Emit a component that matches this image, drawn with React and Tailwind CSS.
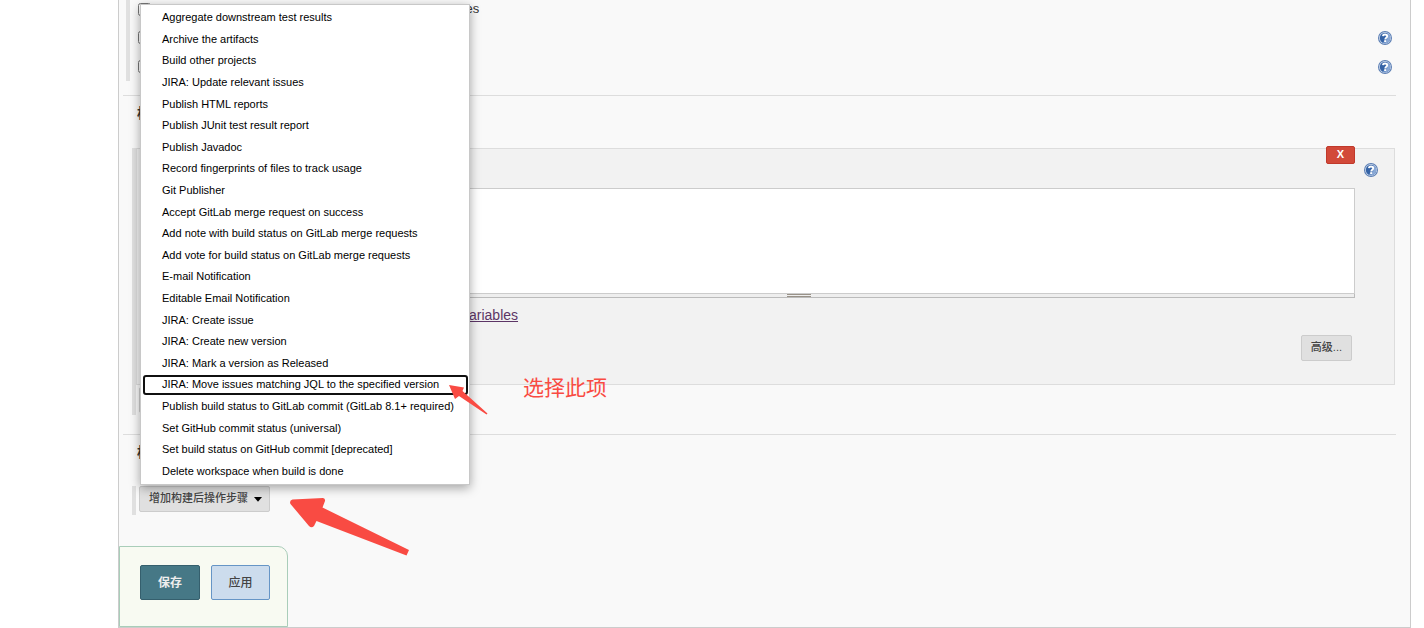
import React from "react";

const postBuildActions = [
  "Aggregate downstream test results",
  "Archive the artifacts",
  "Build other projects",
  "JIRA: Update relevant issues",
  "Publish HTML reports",
  "Publish JUnit test result report",
  "Publish Javadoc",
  "Record fingerprints of files to track usage",
  "Git Publisher",
  "Accept GitLab merge request on success",
  "Add note with build status on GitLab merge requests",
  "Add vote for build status on GitLab merge requests",
  "E-mail Notification",
  "Editable Email Notification",
  "JIRA: Create issue",
  "JIRA: Create new version",
  "JIRA: Mark a version as Released",
  "JIRA: Move issues matching JQL to the specified version",
  "Publish build status to GitLab commit (GitLab 8.1+ required)",
  "Set GitHub commit status (universal)",
  "Set build status on GitHub commit [deprecated]",
  "Delete workspace when build is done",
];

const selectedAction = "JIRA: Move issues matching JQL to the specified version";

function HelpButton() {
  return (
    <button type="button" aria-label="Help" className="block size-4 shrink-0">
      <svg viewBox="0 0 16 16" className="size-4">
        <circle cx="8" cy="8" r="7" fill="#5a7db3" />
        <circle cx="8" cy="8" r="6" fill="#c9d7ea" />
        <circle cx="8" cy="8" r="5.2" fill="#3563a6" />
        <path d="M10 3.200A5.200 5.200 0 0 1 8 13.200C7 13.200 6 12.800 5.200 12.200C9 11 10.500 8 10 3.200z" fill="#6f94c9" />
        <path d="M10 3.200A5.200 5.200 0 0 1 8 13.200C10.500 11 11.500 7 10 3.200z" fill="#89a8d5" />
        <path d="M5.800 6.200C6 4.900 6.900 4.500 8 4.500c1.400 0 2.200.700 2.200 1.700 0 1.500-2 1.600-2 3.200" fill="none" stroke="#fff" strokeWidth="1.800" />
        <rect x="7.200" y="10.200" width="2" height="1.800" fill="#fff" />
      </svg>
    </button>
  );
}

function GreyButton({ children, className = "px-[9px]" }) {
  return (
    <button
      type="button"
      className={
        "flex h-[26px] items-center rounded-[2px] border border-[#ccc] bg-[#e0e0e0] text-[11px] font-medium text-[#444] " +
        className
      }
    >
      {children}
    </button>
  );
}

function ActionMenu() {
  return (
    <div
      role="menu"
      className="absolute bottom-full left-px z-10 mb-px flex h-[481px] w-[330px] flex-col border border-[#c8c8c8] bg-white py-[2px] pr-px pl-[2px] shadow-[0_3px_10px_rgba(0,0,0,0.35)]"
    >
      {postBuildActions.map((name) => (
        <button
          key={name}
          type="button"
          role="menuitem"
          className={
            "my-px flex flex-1 items-center rounded-[3px] border-2 px-[17px] text-left text-[11px] leading-none whitespace-nowrap text-black " +
            (name === selectedAction ? "border-[#101010]" : "border-transparent")
          }
        >
          {name}
        </button>
      ))}
    </div>
  );
}

export default function App() {
  return (
    <div className="relative bg-white pr-[13px] pl-[118px] font-['Liberation_Sans','Noto_Sans_CJK_SC',sans-serif] text-sm text-[#333]">
      <main className="border-x border-b border-[#ccc] bg-[#f9f9f9]">
        <section className="mr-[14px] ml-1 border-b border-[#ddd] pb-[14px]">
          <div className="ml-[3px] border-l-4 border-[#e0e0e0] pr-[3px] pl-2">
            <div className="flex h-[23px] items-center gap-4 pb-[5px] text-[13px]">
              <input id="inject" type="checkbox" className="m-0 size-[13px]" />
              <label htmlFor="inject">Inject passwords to the build as environment variables</label>
            </div>
            <div className="flex h-[29px] items-center justify-between">
              <input type="checkbox" aria-label="Inspect build log" className="m-0 size-[13px]" />
              <HelpButton />
            </div>
            <div className="flex h-[29px] items-center justify-between">
              <input type="checkbox" aria-label="With Ant" className="m-0 size-[13px]" />
              <HelpButton />
            </div>
          </div>
        </section>

        <section className="mr-[14px] ml-1 border-b border-[#ddd] pb-[19px]">
          <h2 className="flex h-[52px] items-start pt-[7px] pl-[14px] text-sm font-bold">构建</h2>
          <div className="ml-[9px] border-l-4 border-[#e0e0e0] pr-px pb-[2px]">
            <div className="border border-[#ddd] bg-[#f2f2f2]">
              <div className="flex h-[39px] items-start justify-end pr-[15px]">
                <div className="-mt-[3px] flex items-start gap-2">
                  <button
                    type="button"
                    className="h-[18px] w-[29px] rounded-[2px] border border-[#c0392b] bg-[#d24939] pb-px text-[11px] leading-none font-bold text-white"
                  >
                    X
                  </button>
                  <div className="pt-4">
                    <HelpButton />
                  </div>
                </div>
              </div>
              <div className="mr-[39px] ml-[106px]">
                <textarea
                  aria-label="命令"
                  className="block h-[106px] w-full resize-none border border-[#ccc] bg-white"
                />
                <div className="flex h-1 justify-center border-x border-b border-[#bbb] bg-[#eee]">
                  <div className="h-[3px] w-6 border-y border-[#999288]" />
                </div>
              </div>
              <p className="ml-[93px] flex h-[34px] items-center gap-1">
                查看
                <a href="#env" className="text-[#5c3566] underline">
                  the list of available environment variables
                </a>
              </p>
              <div className="flex justify-end pt-[3px] pr-[42px] pb-[23px]">
                <GreyButton>高级...</GreyButton>
              </div>
            </div>
            <div className="ml-[3px] pt-[2px]">
              <GreyButton>增加构建步骤</GreyButton>
            </div>
          </div>
        </section>

        <section className="mr-[14px] ml-1 pb-[31px]">
          <h2 className="flex h-[51px] items-start pt-[7px] pl-[14px] text-sm font-bold">构建后操作</h2>
          <div className="ml-[9px] flex border-l-4 border-[#e0e0e0] pb-[3px] pl-[3px]">
            <div className="relative">
              <GreyButton className="gap-[6px] pr-[7px] pl-[9px]">
                增加构建后操作步骤
                <svg viewBox="0 0 8 5" className="h-[5px] w-2">
                  <path d="M0 0h8L4 4.800z" fill="#000" />
                </svg>
              </GreyButton>
              <ActionMenu />
            </div>
          </div>
        </section>

        <footer className="flex h-[81px] w-[169px] items-start gap-[11px] rounded-tr-[10px] border border-[#a9cdb9] bg-[#f8faf2] pt-[18px] pl-5 text-xs font-bold">
          <button type="button" className="h-[35px] w-[60px] rounded-[2px] border border-[#355f6d] bg-[#467886] text-[#eee]">
            保存
          </button>
          <button type="button" className="h-[35px] w-[59px] rounded-[2px] border border-[#6695c6] bg-[#ccdced] font-medium text-[#444]">
            应用
          </button>
        </footer>
      </main>

      <svg viewBox="0 0 40 32" className="absolute top-[384px] left-[448px] z-20 h-8 w-10" aria-hidden="true">
        <path d="M1 1L16 3.500L14.500 7L39.500 29.500L38.500 30.500L11 12L7 15z" fill="#f94b43" />
      </svg>
      <svg viewBox="0 0 120 60" className="absolute top-[496px] left-[289px] z-20 h-[60px] w-[120px]" aria-hidden="true">
        <path
          d="M3.500 3.500L34 2Q36.500 2.500 36 5L33.500 11.500L120 54L117.500 59.500L27.500 25L25 30Q22.500 32.500 20 30L1.500 8Q0 4.500 3.500 3.500z"
          fill="#f94b43"
        />
      </svg>
      <span className="absolute top-[373px] left-[523px] z-20 text-[21px] leading-[30px] text-[#f94b43]">选择此项</span>
    </div>
  );
}
